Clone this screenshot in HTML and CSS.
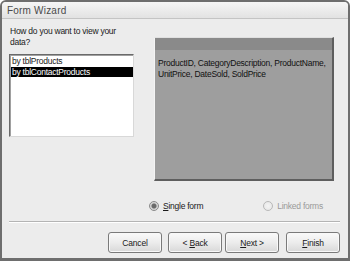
FILE: index.html
```html
<!DOCTYPE html>
<html>
<head>
<meta charset="utf-8">
<link rel="stylesheet" href="styles.css">
</head>
<body>
<div class="window">
  <div class="titlebar">Form Wizard</div>
  <div class="main">
    <div class="left">
      <div class="question">How do you want to view your<br>data?</div>
      <div class="listbox">
        <div class="item">by tblProducts</div>
        <div class="item selected">by tblContactProducts</div>
      </div>
    </div>
    <div class="preview">
      <div class="preview-head"></div>
      <div class="preview-body">ProductID, CategoryDescription, ProductName,<br>UnitPrice, DateSold, SoldPrice</div>
    </div>
  </div>
  <div class="footer">
    <div class="radios">
      <label class="radio"><span class="dot checked"></span><span><u>S</u>ingle form</span></label>
      <label class="radio disabled"><span class="dot"></span><span>Linked forms</span></label>
    </div>
    <div class="separator"></div>
    <div class="buttons">
      <button class="btn">Cancel</button>
      <button class="btn">&lt; <u>B</u>ack</button>
      <button class="btn next"><u>N</u>ext &gt;</button>
      <button class="btn finish"><u>F</u>inish</button>
    </div>
  </div>
</div>
</body>
</html>
```
FILE: styles.css
```css
* { box-sizing: border-box; }
html, body { margin: 0; padding: 0; background: #ffffff; }
body {
  font-family: "Liberation Sans", Arial, sans-serif;
  font-size: 8.5px;
  letter-spacing: -0.25px;
  color: #1a1a1a;
}

.window {
  width: 350px;
  height: 261px;
  border: 2px solid #6e6e6e;
  border-bottom-width: 3px;
  border-radius: 6px 6px 0 0;
  background: #ececec;
  display: flex;
  flex-direction: column;
  overflow: hidden;
}

.titlebar {
  height: 17px;
  flex: none;
  padding: 3px 0 0 5px;
  color: #4a4a4a;
  font-size: 10px;
  letter-spacing: 0.2px;
  background: linear-gradient(#f6f6f6, #e2e2e2);
  border-bottom: 1px solid #c4c4c4;
}

.main {
  display: flex;
  padding: 0 0 0 7px;
}

.left {
  width: 125px;
  display: flex;
  flex-direction: column;
}

.question {
  padding: 7px 2px 0 1px;
  line-height: 11px;
  height: 35px;
  white-space: nowrap;
}

.listbox {
  height: 83px;
  background: #ffffff;
  border-top: 1px solid #6a6a6a;
  border-left: 1px solid #6a6a6a;
  border-right: 1px solid #d8d8d8;
  border-bottom: 1px solid #d8d8d8;
  padding: 1px 0 0 1px;
  box-shadow: inset 1px 1px 0 #a0a0a0;
}

.item {
  height: 10px;
  line-height: 10px;
  padding-left: 1px;
  white-space: nowrap;
  margin-bottom: 1px;
}

.item.selected {
  background: #000000;
  color: #ffffff;
}

.preview {
  margin: 18px 0 0 20px;
  width: 180px;
  height: 144px;
  background: #9e9e9e;
  border-left: 1px solid #f4f4f4;
  border-top: 1px solid #e0e0e0;
  border-right: 2px solid #5e5e5e;
  border-bottom: 2px solid #5e5e5e;
  display: flex;
  flex-direction: column;
}

.preview-head {
  height: 12px;
  background: #8a8a8a;
}

.preview-body {
  padding: 8px 2px 0 3px;
  line-height: 11px;
  white-space: nowrap;
  color: #111111;
}

.footer {
  margin-top: auto;
  display: flex;
  flex-direction: column;
}

.radios {
  display: flex;
  padding-left: 147px;
  height: 12px;
  align-items: center;
  white-space: nowrap;
}

.radio {
  display: flex;
  align-items: center;
  gap: 4px;
}

.radio.disabled {
  margin-left: 60px;
  color: #9a9a9a;
}

.dot {
  flex: none;
  width: 10px;
  height: 10px;
  border-radius: 50%;
  border: 1px solid #b8b8b8;
  background: radial-gradient(circle, #f4f4f4 0, #e4e4e4 100%);
}

.dot.checked {
  border-color: #8a8a8a;
  background: radial-gradient(circle, #6a6a6a 0, #6a6a6a 2px, #cfcfcf 3px, #efefef 100%);
}

.separator {
  margin: 9px 8px 0 7px;
  height: 2px;
  border-top: 1px solid #b4b4b4;
  border-bottom: 1px solid #ffffff;
}

.buttons {
  display: flex;
  justify-content: flex-end;
  padding: 9px 8px 5px 0;
  gap: 3px;
}

.btn {
  width: 54px;
  height: 21px;
  padding: 0;
  font-family: "Liberation Sans", Arial, sans-serif;
  font-size: 8.5px;
  letter-spacing: -0.2px;
  color: #1a1a1a;
  border: 1px solid #7a7a7a;
  border-radius: 3px;
  background: linear-gradient(#fafafa 0%, #ececec 50%, #d8d8d8 100%);
  box-shadow: inset 0 0 0 1px #f8f8f8;
}

.btn:first-child { margin-right: 3px; }
.btn.finish { margin-left: 4px; }
```
